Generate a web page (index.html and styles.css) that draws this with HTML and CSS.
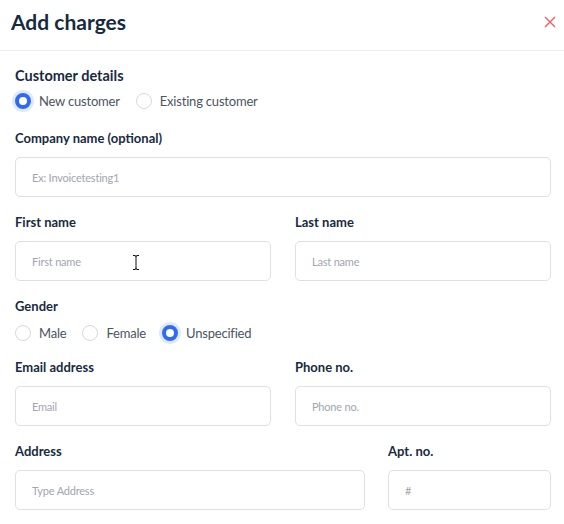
FILE: index.html
```html
<!DOCTYPE html>
<html lang="en">
<head>
<meta charset="utf-8">
<title>Add charges</title>
<link rel="stylesheet" href="styles.css">
</head>
<body>
<div class="modal">
  <header class="modal-header">
    <h1 class="modal-title">Add charges</h1>
    <button class="close-btn" aria-label="Close">
      <svg width="12" height="12" viewBox="0 0 12 12"><path d="M1 1 L11 11 M11 1 L1 11" stroke="#ec5b5b" stroke-width="1.4" fill="none"/></svg>
    </button>
  </header>
  <div class="modal-body">
    <div class="section-title">Customer details</div>
    <div class="radio-row first-radios">
      <label class="radio"><span class="dot checked"></span><span class="radio-text">New customer</span></label>
      <label class="radio"><span class="dot"></span><span class="radio-text">Existing customer</span></label>
    </div>

    <div class="field row-company">
      <div class="label">Company name (optional)</div>
      <div class="input">Ex: Invoicetesting1</div>
    </div>

    <div class="grid-2 row">
      <div class="field">
        <div class="label">First name</div>
        <div class="input cursor-host">First name
          <svg class="ibeam" width="10" height="17" viewBox="0 0 10 17"><path d="M2 1.5 H4 Q5 1.5 5 3 Q5 1.5 6 1.5 H8 M5 3 V14 M2 15.5 H4 Q5 15.5 5 14 Q5 15.5 6 15.5 H8" stroke="#fff" stroke-width="2.6" fill="none"/><path d="M2 1.5 H4 Q5 1.5 5 3 Q5 1.5 6 1.5 H8 M5 3 V14 M2 15.5 H4 Q5 15.5 5 14 Q5 15.5 6 15.5 H8" stroke="#111" stroke-width="1" fill="none"/></svg>
        </div>
      </div>
      <div class="field">
        <div class="label">Last name</div>
        <div class="input">Last name</div>
      </div>
    </div>

    <div class="row">
      <div class="label">Gender</div>
      <div class="radio-row gender-radios">
        <label class="radio"><span class="dot"></span><span class="radio-text">Male</span></label>
        <label class="radio"><span class="dot"></span><span class="radio-text">Female</span></label>
        <label class="radio"><span class="dot checked"></span><span class="radio-text">Unspecified</span></label>
      </div>
    </div>

    <div class="grid-2 row-email">
      <div class="field">
        <div class="label">Email address</div>
        <div class="input">Email</div>
      </div>
      <div class="field">
        <div class="label">Phone no.</div>
        <div class="input">Phone no.</div>
      </div>
    </div>

    <div class="grid-addr row">
      <div class="field">
        <div class="label">Address</div>
        <div class="input">Type Address</div>
      </div>
      <div class="field">
        <div class="label">Apt. no.</div>
        <div class="input">#</div>
      </div>
    </div>
  </div>
</div>
</body>
</html>
```

FILE: styles.css
```css
* { box-sizing: border-box; }
html, body { margin: 0; padding: 0; background: #fff; }
body {
  font-family: Lato, "Open Sans", "Liberation Sans", sans-serif;
  color: #182a3f;
}
.modal { width: 564px; }
.modal-header {
  height: 51px;
  border-bottom: 1px solid #ececec;
  display: flex;
  align-items: center;
  justify-content: space-between;
  padding: 0 8px 0 11px;
}
.modal-title {
  margin: 0;
  font-size: 21px;
  font-weight: 700;
  line-height: 26px;
  color: #182a3f;
  padding-bottom: 6px;
}
.close-btn {
  background: none;
  border: 0;
  padding: 0;
  width: 12px;
  height: 12px;
  margin-bottom: 7px;
  display: flex;
}
.modal-body { padding: 15px 13px 0 15px; }
.section-title {
  font-size: 14.5px;
  font-weight: 700;
  line-height: 20px;
}
.label {
  font-size: 13px;
  font-weight: 700;
  line-height: 20px;
  margin-bottom: 9px;
  color: #182a3f;
}
.radio-row {
  display: flex;
  align-items: center;
  gap: 16px;
  height: 24px;
}
.first-radios { margin-top: 3px; }
.gender-radios { margin-top: -4px; }
.radio {
  display: flex;
  align-items: center;
  gap: 8px;
  font-size: 13px;
  letter-spacing: -0.2px;
  color: #4b5563;
}
.dot {
  width: 16px;
  height: 16px;
  border-radius: 50%;
  border: 1px solid #d5d8dd;
  background: #fff;
  flex: none;
}
.dot.checked {
  border: 4px solid #2e6bf0;
  box-shadow: 0 0 0 3px #dfe8fd;
}
.radio-text { line-height: 20px; }
.row-company { margin-top: 15px; }
.row { margin-top: 15px; }
.row-email { margin-top: 12px; }
.grid-2 {
  display: grid;
  grid-template-columns: 1fr 1fr;
  gap: 24px;
}
.grid-addr {
  display: grid;
  grid-template-columns: 1fr 163px;
  gap: 23px;
}
.input {
  height: 40px;
  border: 1px solid #dde0e5;
  border-radius: 5px;
  padding: 0 16px;
  display: flex;
  align-items: center;
  font-size: 11px;
  letter-spacing: -0.2px;
  color: #a1a6ae;
}
.cursor-host { position: relative; }
.ibeam {
  position: absolute;
  left: 115px;
  top: 12px;
}
```
